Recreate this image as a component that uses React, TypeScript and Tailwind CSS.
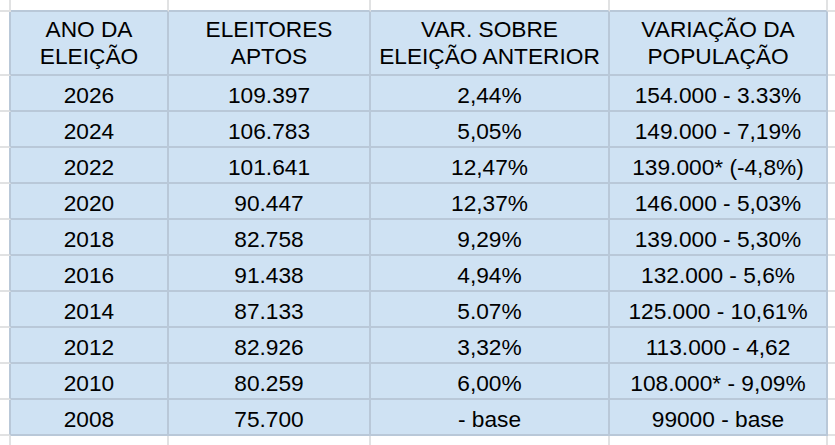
import React from "react";

const header = [
  ["ANO DA", "ELEIÇÃO"],
  ["ELEITORES", "APTOS"],
  ["VAR. SOBRE", "ELEIÇÃO ANTERIOR"],
  ["VARIAÇÃO DA", "POPULAÇÃO"],
];

const rows = [
  ["2026", "109.397", "2,44%", "154.000 - 3.33%"],
  ["2024", "106.783", "5,05%", "149.000 - 7,19%"],
  ["2022", "101.641", "12,47%", "139.000* (-4,8%)"],
  ["2020", "90.447", "12,37%", "146.000 - 5,03%"],
  ["2018", "82.758", "9,29%", "139.000 - 5,30%"],
  ["2016", "91.438", "4,94%", "132.000 - 5,6%"],
  ["2014", "87.133", "5.07%", "125.000 - 10,61%"],
  ["2012", "82.926", "3,32%", "113.000 - 4,62"],
  ["2010", "80.259", "6,00%", "108.000* - 9,09%"],
  ["2008", "75.700", "- base", "99000 - base"],
];

function Margin({ r = "gray", b = "gray", noR = false, noB = false }: { r?: "gray" | "dark"; b?: "gray" | "dark"; noR?: boolean; noB?: boolean }) {
  const rc = r === "dark" ? "border-r-[#b9c8d8]" : "border-r-[#e1e2e3]";
  const bc = b === "dark" ? "border-b-[#b9c8d8]" : "border-b-[#e1e2e3]";
  return (
    <div
      className={`bg-white border-solid ${noR ? "border-r-0" : "border-r-2"} ${noB ? "border-b-0" : "border-b-2"} ${rc} ${bc}`}
    />
  );
}

function Cell({ children }: { children: React.ReactNode }) {
  return (
    <div className="bg-[#cfe2f3] border-solid border-r-2 border-b-2 border-r-[#b9c8d8] border-b-[#b9c8d8] flex flex-col items-center justify-center text-center text-black whitespace-nowrap">
      {children}
    </div>
  );
}

export default function App() {
  return (
    <div
      className="w-[835px] h-[445px] overflow-hidden bg-white grid grid-cols-[11px_158px_202px_239px_218px_7px] grid-rows-[12px_64px_repeat(10,36px)_9px] text-[22.7px]"
      style={{ fontFamily: '"Liberation Sans", Arial, sans-serif' }}
    >
      {/* top strip */}
      <Margin r="gray" b="gray" />
      <Margin r="gray" b="dark" />
      <Margin r="gray" b="dark" />
      <Margin r="gray" b="dark" />
      <Margin r="gray" b="dark" />
      <Margin noR b="gray" />

      {/* header */}
      <Margin r="dark" b="gray" />
      {header.map((h, i) => (
        <Cell key={i}>
          <span className="leading-[27px]">{h[0]}</span>
          <span className="leading-[27px]">{h[1]}</span>
        </Cell>
      ))}
      <Margin noR b="gray" />

      {rows.map((row, ri) => (
        <React.Fragment key={ri}>
          <Margin r="dark" b="gray" />
          {row.map((v, ci) => (
            <Cell key={ci}>
              <span className="leading-[26px] pt-[3px]">{v}</span>
            </Cell>
          ))}
          <Margin noR b="gray" />
        </React.Fragment>
      ))}

      {/* bottom strip */}
      <Margin r="gray" noB />
      <Margin r="gray" noB />
      <Margin r="gray" noB />
      <Margin r="gray" noB />
      <Margin r="gray" noB />
      <Margin noR noB />
    </div>
  );
}
